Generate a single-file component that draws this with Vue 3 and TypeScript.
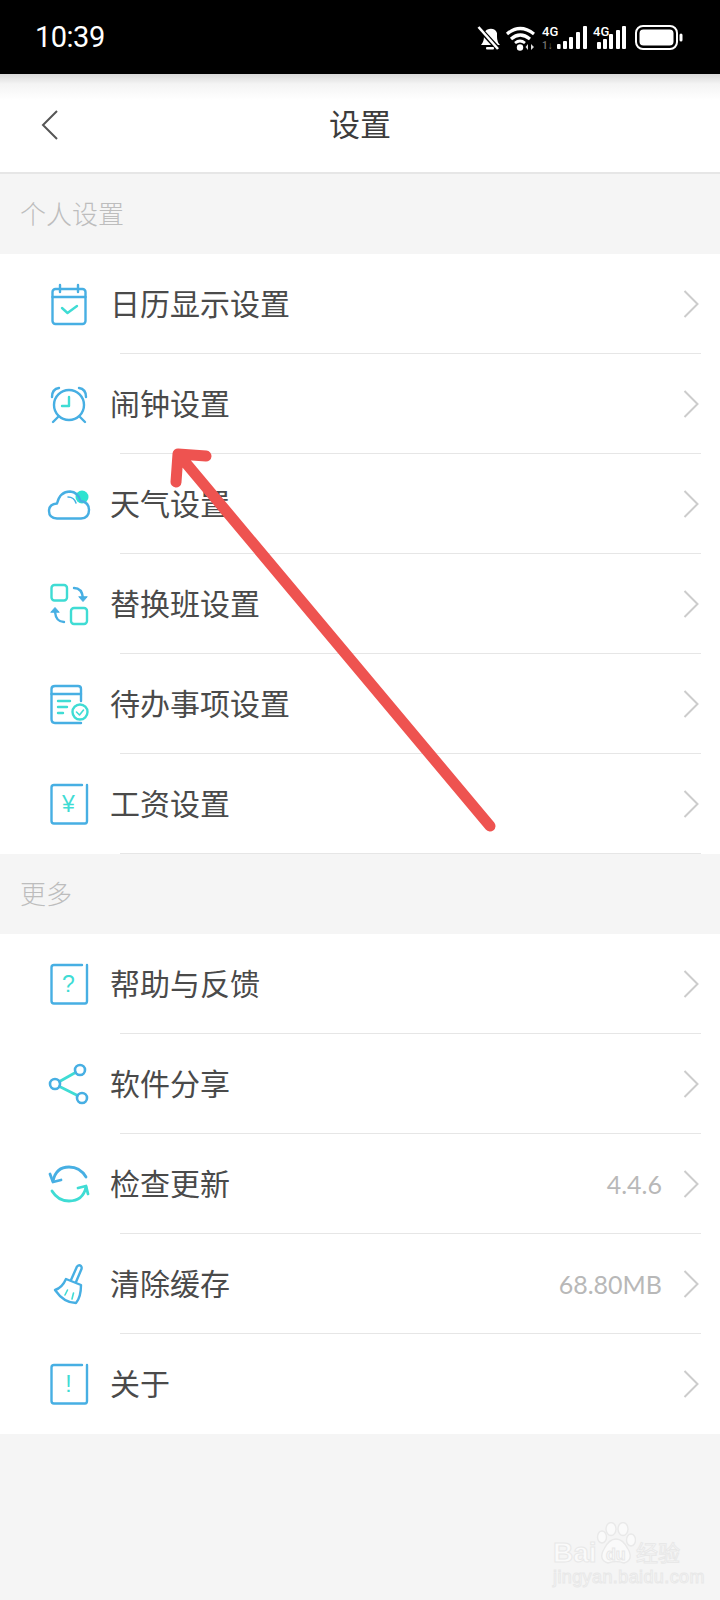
<template>
  <div class="page">
    <div class="status-bar">
      <span class="time">10:39</span>
      <svg class="status-icons" width="210" height="30" viewBox="0 0 210 30">
        <!-- bell with slash -->
        <path d="M5 20 Q8 17 8 11 Q8 5 13 4 Q19 3 21 8 L21 12 Q21 17 24 20 Z" fill="#fff" />
        <path d="M2 2 L23 25" stroke="#000" stroke-width="5" />
        <path d="M2.5 2 L22 24" stroke="#fff" stroke-width="2.6" />
        <rect x="10" y="22" width="8" height="2.6" rx="1" fill="#fff" />
        <!-- wifi -->
        <path d="M31 9 Q44 -2 58 9" fill="none" stroke="#fff" stroke-width="3.2" />
        <path d="M35 14 Q44 6 54 14" fill="none" stroke="#fff" stroke-width="3.2" />
        <path d="M39 18 Q44 14 49 18" fill="none" stroke="#fff" stroke-width="2.8" />
        <circle cx="44" cy="22.5" r="3.2" fill="#fff" />
        <path d="M52 19 V25 L49.5 22 Z M55 19 V25 L58 22 Z" fill="#ddd" />
        <!-- sim 1 -->
        <text x="66" y="11" class="net">4G</text>
        <text x="66" y="24" class="net small">1↓</text>
        <g fill="#fff">
          <rect x="81" y="19" width="3.6" height="5" rx="1" />
          <rect x="87" y="16" width="4" height="8" rx="1" />
          <rect x="93" y="12" width="4" height="12" rx="1" />
          <rect x="100" y="7" width="4" height="17" rx="1" />
          <rect x="107" y="1" width="4" height="23" rx="1" />
        </g>
        <!-- sim 2 -->
        <text x="117" y="11" class="net">4G</text>
        <g fill="#fff">
          <rect x="121" y="17" width="4" height="7" rx="1" />
          <rect x="127" y="14" width="4" height="10" rx="1" />
          <rect x="133" y="9" width="4" height="15" rx="1" />
          <rect x="140" y="5" width="4" height="19" rx="1" />
          <rect x="146" y="1" width="4" height="23" rx="1" />
        </g>
        <!-- battery -->
        <rect x="160" y="1" width="41" height="23" rx="7" fill="none" stroke="#fff" stroke-width="2" />
        <rect x="163.5" y="4.5" width="34" height="16" rx="4" fill="#fff" />
        <rect x="203.5" y="8.5" width="3" height="8" rx="1.5" fill="#fff" />
      </svg>
    </div>

    <header class="nav">
      <svg class="back" width="20" height="32" viewBox="0 0 20 32">
        <path d="M17 2 L3 16 L17 30" fill="none" stroke="#555" stroke-width="2" />
      </svg>
      <h1 class="title">设置</h1>
    </header>

    <section v-for="group in groups" :key="group.name">
      <div class="group-name">{{ group.name }}</div>
      <ul class="list">
        <li v-for="item in group.items" :key="item.label" class="row">
          <svg class="icon" width="50" height="50" viewBox="0 0 50 50" fill="none" stroke-width="2.4" stroke-linecap="round" stroke-linejoin="round">
            <template v-if="item.icon === 'calendar'">
              <rect x="6.5" y="10" width="33" height="35" rx="3" :stroke="BLUE" />
              <path d="M6.5 18 H39.5 M14 6 V13 M32 6 V13" :stroke="BLUE" />
              <path d="M16 29 L21.5 34 L31 27" :stroke="TEAL" />
            </template>
            <template v-else-if="item.icon === 'alarm'">
              <circle cx="23" cy="26" r="15" :stroke="BLUE" />
              <path d="M23 18 V27 H16" :stroke="TEAL" />
              <path d="M6 18 Q6 10 13 9 M40 18 Q40 10 33 9 M12 38 L7 43 M34 38 L39 43" :stroke="BLUE" />
            </template>
            <template v-else-if="item.icon === 'cloud'">
              <circle cx="36" cy="18" r="6.5" fill="#2fe3d0" stroke="none" />
              <path d="M11 39.5 Q3 39 3 32 Q3 25 11 24.5 Q14 12.5 24 12.5 Q32 13 34.5 22 Q43 23 43 31 Q43 39 35 39.5 Z" :stroke="BLUE" />
              <path d="M22 18 Q28 18 30 24" :stroke="BLUE" stroke-width="1.5" />
            </template>
            <template v-else-if="item.icon === 'swap'">
              <rect x="5.5" y="6" width="15.5" height="15.5" rx="3" :stroke="TEAL" />
              <rect x="25" y="29" width="16" height="16" rx="3" :stroke="TEAL" />
              <path d="M28 9 Q36 9 37 19" :stroke="BLUE" />
              <path d="M33 18 L37 22.5 L41 18 Z" :fill="BLUE" :stroke="BLUE" stroke-width="1" />
              <path d="M18 43 Q10 43 9 33" :stroke="BLUE" />
              <path d="M5 33 L9 28.5 L13 33 Z" :fill="BLUE" :stroke="BLUE" stroke-width="1" />
            </template>
            <template v-else-if="item.icon === 'todo'">
              <path d="M35 44 H9 Q5.5 44 5.5 40 V10 Q5.5 7 9 7 H32 Q35 7 35 10 V22" :stroke="BLUE" />
              <path d="M5.5 15 H35" :stroke="BLUE" />
              <path d="M12 22 H24 M12 28 H21 M12 34 H17" :stroke="TEAL" />
              <circle cx="34" cy="33" r="7.5" :stroke="TEAL" />
              <path d="M30.5 33 L33.5 36 L37.5 31" :stroke="TEAL" stroke-width="1.6" />
            </template>
            <template v-else-if="item.icon === 'refresh'">
              <path d="M7 22 Q10 8 23 8 Q34 8 40 18" :stroke="BLUE" stroke-width="2.8" />
              <path d="M4 15 L7 23 L15 21" :stroke="BLUE" stroke-width="2.8" />
              <path d="M40 28 Q37 42 23 42 Q12 42 6 32" :stroke="TEAL" stroke-width="2.8" />
              <path d="M42 35 L40 27 L32 29" :stroke="TEAL" stroke-width="2.8" />
            </template>
            <template v-else-if="item.icon === 'share'">
              <path d="M13.5 22.5 L29.5 13.5 M13.5 27.5 L31.5 36.5" :stroke="TEAL" stroke-width="2.8" />
              <circle cx="34" cy="11" r="5" :stroke="BLUE" stroke-width="2.6" />
              <circle cx="9" cy="25" r="5" :stroke="BLUE" stroke-width="2.6" />
              <circle cx="36" cy="39" r="5" :stroke="BLUE" stroke-width="2.6" />
            </template>
            <template v-else-if="item.icon === 'broom'">
              <path d="M25 21 L31 7.5 Q33 5.5 35 7 Q36 8 35.5 10 L30 23" :stroke="BLUE" />
              <path d="M20 20 L35 26 Q35 38 30 44 Q18 44 9 31 Q16 29 20 20 Z" :stroke="BLUE" />
              <path d="M19 36 L21.5 31 M26 40 L27.5 34" :stroke="TEAL" stroke-width="1.6" />
            </template>
            <template v-else>
              <path d="M36 6 H8 Q5.5 6 5.5 8.5 V42 Q5.5 44.5 8 44.5 H39 Q41 44.5 41 42 V6" :stroke="BLUE" />
              <text x="22.5" y="33" class="mark">{{ item.icon === 'yen' ? '¥' : item.icon === 'help' ? '?' : '!' }}</text>
            </template>
          </svg>
          <div class="row-main">
            <span class="label">{{ item.label }}</span>
            <span v-if="item.value" class="value">{{ item.value }}</span>
          </div>
          <svg class="more" width="16" height="28" viewBox="0 0 16 28">
            <path d="M1.5 1 L14.5 14 L1.5 27" fill="none" stroke="#ccc" stroke-width="2" />
          </svg>
        </li>
      </ul>
    </section>

    <!-- 截图上的红色箭头和水印 -->
    <svg class="arrow" width="720" height="1600" viewBox="0 0 720 1600">
      <path d="M490 826 L180 456 M206 456 L178 454 L176 482" fill="none" stroke="#ee5350" stroke-width="11" stroke-linecap="round" stroke-linejoin="round" />
    </svg>
    <div class="watermark">
      <svg class="paw" width="40" height="44" viewBox="0 0 40 44" fill="#fafafa" stroke="#e9e9e9" stroke-width="1.4">
        <ellipse cx="6" cy="15" rx="4.5" ry="6" />
        <ellipse cx="15" cy="7" rx="5" ry="6.5" />
        <ellipse cx="27" cy="7" rx="5" ry="6.5" />
        <ellipse cx="35" cy="18" rx="4.5" ry="6" />
        <path d="M20 17 Q27 17 32 27 Q38 38 28 41 Q20 38 12 41 Q2 38 8 27 Q13 17 20 17 Z" />
      </svg>
      <span class="wm-bai">Bai</span>
      <span class="wm-du">du</span>
      <span class="wm-jy">经验</span>
      <span class="wm-url">jingyan.baidu.com</span>
    </div>
  </div>
</template>

<script setup lang="ts">
interface Item {
  icon: string;
  label: string;
  value?: string;
}

const BLUE = '#47afe3';
const TEAL = '#3fdcd4';

const groups: { name: string; items: Item[] }[] = [
  {
    name: '个人设置',
    items: [
      { icon: 'calendar', label: '日历显示设置' },
      { icon: 'alarm', label: '闹钟设置' },
      { icon: 'cloud', label: '天气设置' },
      { icon: 'swap', label: '替换班设置' },
      { icon: 'todo', label: '待办事项设置' },
      { icon: 'yen', label: '工资设置' },
    ],
  },
  {
    name: '更多',
    items: [
      { icon: 'help', label: '帮助与反馈' },
      { icon: 'share', label: '软件分享' },
      { icon: 'refresh', label: '检查更新', value: '4.4.6' },
      { icon: 'broom', label: '清除缓存', value: '68.80MB' },
      { icon: 'about', label: '关于' },
    ],
  },
];
</script>

<style>
html,
body {
  margin: 0;
  background: #f5f5f5;
}
</style>

<style scoped>
.page {
  position: relative;
  width: 720px;
  height: 1600px;
  overflow: hidden;
  background: #f5f5f5;
  font-family: 'Noto Sans CJK SC', 'Noto Sans', sans-serif;
}

.status-bar {
  display: flex;
  align-items: center;
  justify-content: space-between;
  box-sizing: border-box;
  height: 74px;
  padding: 0 34px 0 35px;
  background: #000;
  color: #fff;
}

.status-icons {
  margin-top: 6px;
}

.time {
  font-family: Roboto, sans-serif;
  font-size: 29px;
  letter-spacing: -0.5px;
}

.net {
  font-family: Roboto, sans-serif;
  font-size: 13px;
  font-weight: 500;
  fill: #fff;
}

.net.small {
  font-size: 10px;
  fill: #777;
}

.nav {
  position: relative;
  display: flex;
  align-items: center;
  justify-content: center;
  box-sizing: border-box;
  height: 100px;
  padding-bottom: 2px;
  border-bottom: 2px solid #e6e6e6;
  background: linear-gradient(#d9d9d9, #f4f4f4 10px, #fff 26px);
}

.back {
  position: absolute;
  left: 40px;
  top: 35px;
}

.title {
  margin: 0;
  font-size: 31px;
  font-weight: 400;
  color: #3c3c3c;
}

.group-name {
  display: flex;
  align-items: center;
  box-sizing: border-box;
  height: 80px;
  padding: 0 0 4px 20px;
  font-size: 26px;
  font-weight: 300;
  color: #bdbdbd;
}

.list {
  margin: 0;
  padding: 0;
  list-style: none;
  background: #fff;
}

.row {
  position: relative;
  display: flex;
  align-items: center;
  box-sizing: border-box;
  height: 100px;
  padding: 0 21px 0 46px;
}

.row::after {
  content: '';
  position: absolute;
  left: 120px;
  right: 19px;
  bottom: 0;
  height: 1px;
  background: #e6e6e6;
}

section:last-of-type .row:last-child::after {
  display: none;
}

.icon {
  flex: none;
}

.row-main {
  display: flex;
  flex: 1;
  align-items: center;
  justify-content: space-between;
  padding: 0 21px 0 14px;
}

.label {
  margin-top: -4px;
  font-size: 30px;
  color: #4a4a4a;
}

.value {
  font-family: Lato, sans-serif;
  font-size: 25px;
  color: #b8b8b8;
}

.more {
  flex: none;
}

.mark {
  font-family: 'Liberation Sans', sans-serif;
  font-size: 23px;
  text-anchor: middle;
  fill: #3fdcd4;
  stroke: none;
}

.arrow {
  position: absolute;
  top: 0;
  left: 0;
  pointer-events: none;
}

.watermark {
  position: absolute;
  left: 553px;
  top: 1520px;
  width: 130px;
  height: 66px;
  color: #fafafa;
  -webkit-text-stroke: 1px #e8e8e8;
  font-family: 'Liberation Sans', sans-serif;
}

.paw {
  position: absolute;
  left: 43px;
  top: 2px;
}

.wm-bai,
.wm-du,
.wm-jy,
.wm-url {
  position: absolute;
  white-space: nowrap;
}

.wm-bai {
  left: 0;
  top: 17px;
  font-size: 28px;
  font-weight: 700;
}

.wm-du {
  left: 53px;
  top: 26px;
  font-size: 16px;
  font-weight: 700;
}

.wm-jy {
  left: 83px;
  top: 16px;
  font-family: 'Noto Sans CJK SC', sans-serif;
  font-size: 22px;
  line-height: 30px;
}

.wm-url {
  left: 0;
  top: 47px;
  font-size: 18px;
  letter-spacing: 0.4px;
}
</style>
